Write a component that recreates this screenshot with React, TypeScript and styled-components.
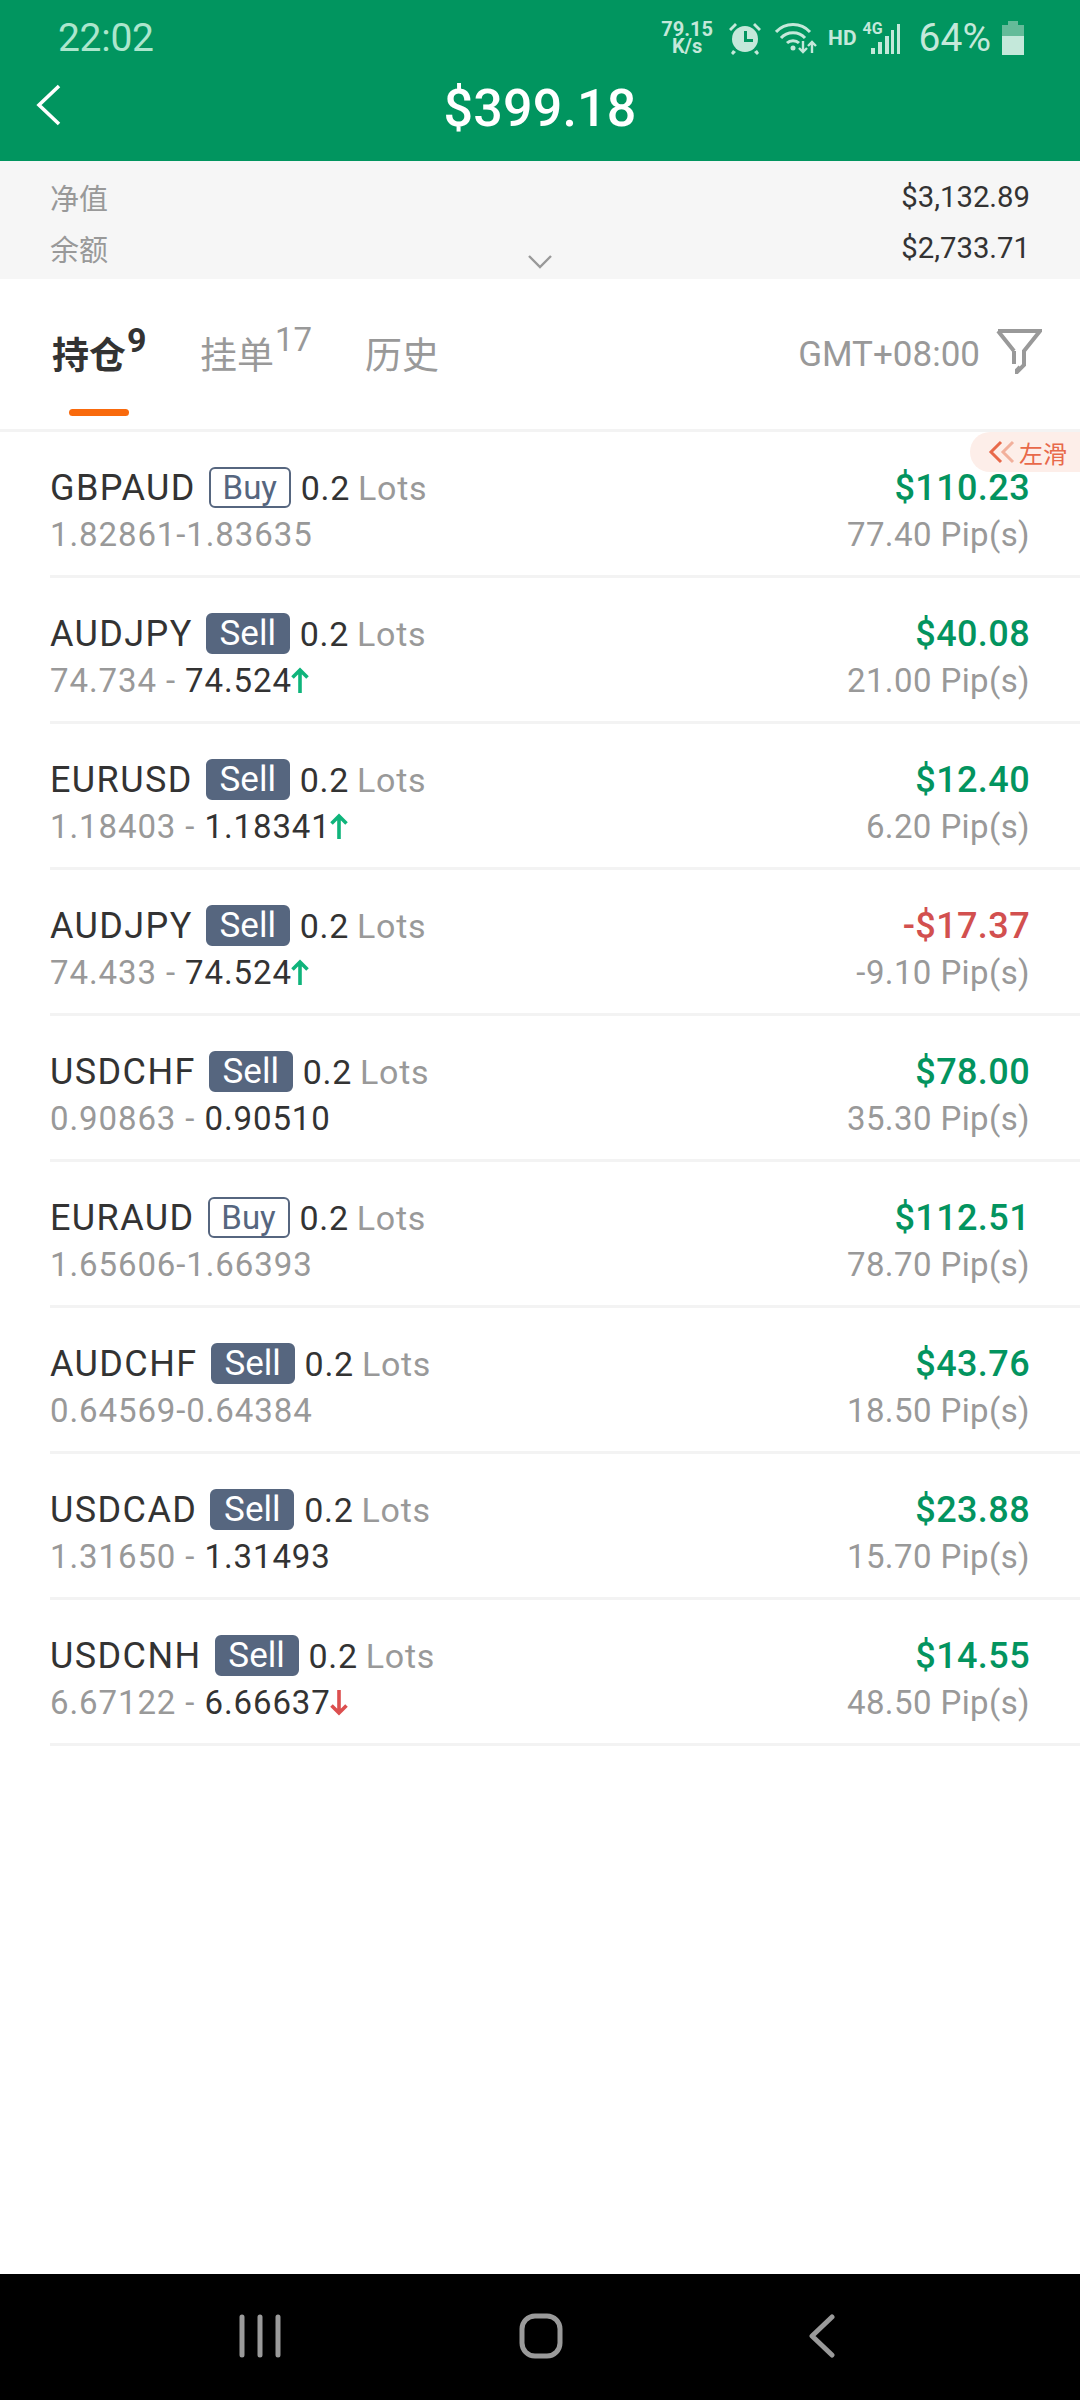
import React from 'react';
import styled, { createGlobalStyle } from 'styled-components';

const GlobalStyle = createGlobalStyle`
    html, body {
        margin: 0;
        padding: 0;
        background: #fff;
    }
    body {
        font-family: Roboto, "Noto Sans CJK SC", sans-serif;
    }
`

const Screen = styled.div`
    width: 1080px;
    height: 2400px;
    display: flex;
    flex-direction: column;
    background: #fff;
    position: relative;
    overflow: hidden;
`

const Header = styled.div`
    height: 161px;
    flex: none;
    background: #01955f;
    display: flex;
    flex-direction: column;
`

const StatusBar = styled.div`
    height: 76px;
    display: flex;
    align-items: center;
    padding: 0 56px 0 58px;
    color: #c4e8da;
`

const Clock = styled.div`
    font-size: 39px;
    line-height: 44px;
    color: #ace6cd;
    margin-right: auto;
    letter-spacing: -0.3px;
`

const NetSpeed = styled.div`
    width: 54px;
    margin-right: 14px;
    font-size: 20px;
    font-weight: 700;
    line-height: 17px;
    text-align: center;
`

const AlarmGap = styled.span`
    width: 13px;
`

const HdText = styled.div`
    font-size: 21px;
    font-weight: 700;
    margin: 0 6px 0 11px;
`

const SignalBox = styled.div`
    width: 38px;
    height: 34px;
    position: relative;
`

const NetworkBadge = styled.span`
    position: absolute;
    left: 0;
    top: 0;
    font-size: 16px;
    line-height: 16px;
    font-weight: 700;
`

const Battery = styled.div`
    font-size: 39px;
    line-height: 44px;
    margin: 0 11px 0 18px;
`

const TitleBar = styled.div`
    height: 60px;
    position: relative;
    display: flex;
    align-items: center;
    justify-content: center;
`

const Title = styled.div`
    color: #fff;
    font-size: 52px;
    line-height: 60px;
    font-weight: 500;
    letter-spacing: 0.2px;
    position: relative;
    top: 3px;
`

const BackButton = styled.svg`
    position: absolute;
    left: 36px;
    top: 8px;
`

const Summary = styled.div`
    height: 118px;
    flex: none;
    background: #f6f6f6;
    padding: 10px 50px 0;
    box-sizing: border-box;
    position: relative;
`

const SummaryRow = styled.div`
    height: 51px;
    display: flex;
    justify-content: space-between;
    align-items: center;
    font-size: 29px;
    color: #999;
`

const SummaryValue = styled.span`
    color: #333;
    font-size: 29.3px;
`

const ExpandIcon = styled.svg`
    position: absolute;
    left: 527px;
    top: 93px;
`

const TabBar = styled.div`
    height: 153px;
    flex: none;
    box-sizing: border-box;
    border-bottom: 3px solid #f3f3f3;
    display: flex;
    padding: 0 38px 0 52px;
    position: relative;
`

const Tab = styled.div<{ $active?: boolean; $width: number }>`
    width: ${p => p.$width}px;
    height: 150px;
    position: relative;
    display: flex;
    align-items: flex-start;
    padding-top: 53px;
    box-sizing: border-box;
    font-size: 37px;
    line-height: 50px;
    font-weight: ${p => (p.$active ? 700 : 400)};
    color: ${p => (p.$active ? '#333' : '#999')};
`

const TabCount = styled.sup<{ $active?: boolean }>`
    font-size: ${p => (p.$active ? 34 : 33)}px;
    line-height: 32px;
    margin-top: -8px;
    margin-left: 1px;
    vertical-align: baseline;
    font-weight: ${p => (p.$active ? 700 : 400)};
`

const TabMark = styled.div`
    position: absolute;
    left: 17px;
    top: 130px;
    width: 60px;
    height: 7px;
    border-radius: 4px;
    background: #f96a0d;
`

const TabTools = styled.div`
    margin-left: auto;
    height: 150px;
    display: flex;
    align-items: center;
    box-sizing: border-box;
    color: #999;
    font-size: 35px;
`

const FilterIcon = styled.svg`
    margin-left: 16px;
    margin-top: -6px;
`

const TradeList = styled.div`
    flex: 1;
    position: relative;
`

const TradeRow = styled.div`
    height: 146px;
    box-sizing: border-box;
    margin-left: 50px;
    padding-right: 50px;
    padding-top: 35px;
    border-bottom: 3px solid #f3f3f3;
    display: flex;
    justify-content: space-between;
`

const TradeColumn = styled.div<{ $right?: boolean }>`
    display: flex;
    flex-direction: column;
    align-items: ${p => (p.$right ? 'flex-end' : 'flex-start')};
`

const TopLine = styled.div`
    height: 41px;
    display: flex;
    align-items: center;
    font-size: 36px;
    letter-spacing: 1.4px;
    color: #333;
`

const BottomLine = styled.div`
    height: 44px;
    margin-top: 4px;
    display: flex;
    align-items: center;
    font-size: 33px;
    letter-spacing: 0.9px;
    color: #999;
    white-space: pre;
`

const PipsLine = styled(BottomLine)`
    letter-spacing: 0.4px;
`

const SideTag = styled.span<{ $buy?: boolean }>`
    height: 41px;
    box-sizing: border-box;
    width: ${p => (p.$buy ? 82 : 84)}px;
    margin: 0 10px 0 13px;
    display: flex;
    align-items: center;
    justify-content: center;
    border-radius: 6px;
    font-size: ${p => (p.$buy ? 33 : 35)}px;
    letter-spacing: 0;
    border: 2px solid #56667f;
    background: ${p => (p.$buy ? '#fff' : '#56667f')};
    color: ${p => (p.$buy ? '#56667f' : '#fff')};
`

const LotSize = styled.span`
    color: #333;
    font-size: 34px;
    letter-spacing: 0.7px;
`

const LotUnit = styled.span`
    color: #999;
    font-size: 34px;
    margin-left: 8px;
    letter-spacing: 0.7px;
`

const Current = styled.span`
    color: #333;
    font-weight: 450;
`

const Profit = styled.div<{ $loss?: boolean }>`
    height: 41px;
    display: flex;
    align-items: center;
    font-size: 36px;
    font-weight: 465;
    letter-spacing: 0.4px;
    color: ${p => (p.$loss ? '#d2504f' : '#03945f')};
`

const SwipeHint = styled.div`
    position: absolute;
    right: 0;
    top: 0;
    width: 110px;
    height: 40px;
    border-radius: 20px 0 0 20px;
    background: #fdeee9;
    color: #e8694a;
    font-size: 24px;
    display: flex;
    align-items: center;
    padding-left: 18px;
    box-sizing: border-box;
    gap: 3px;
`

const ArrowIcon = styled.svg<{ $down?: boolean }>`
    margin-left: -2px;
    transform: ${p => (p.$down ? 'rotate(180deg)' : 'none')};
`

const NavBar = styled.div`
    height: 126px;
    flex: none;
    background: #000;
    position: relative;
    display: grid;
    grid-template-columns: 239px 42px 238px 44px 245px 27px 245px;
    align-items: center;
    padding-bottom: 2px;
    box-sizing: border-box;
`

type Trade = {
    symbol: string;
    side: 'Buy' | 'Sell';
    open: string;
    close?: string;
    arrow?: 'up' | 'down';
    profit: string;
    pips: string;
};

const trades: Trade[] = [
    { symbol: 'GBPAUD', side: 'Buy', open: '1.82861-1.83635', profit: '$110.23', pips: '77.40 Pip(s)' },
    { symbol: 'AUDJPY', side: 'Sell', open: '74.734', close: '74.524', arrow: 'up', profit: '$40.08', pips: '21.00 Pip(s)' },
    { symbol: 'EURUSD', side: 'Sell', open: '1.18403', close: '1.18341', arrow: 'up', profit: '$12.40', pips: '6.20 Pip(s)' },
    { symbol: 'AUDJPY', side: 'Sell', open: '74.433', close: '74.524', arrow: 'up', profit: '-$17.37', pips: '-9.10 Pip(s)' },
    { symbol: 'USDCHF', side: 'Sell', open: '0.90863', close: '0.90510', profit: '$78.00', pips: '35.30 Pip(s)' },
    { symbol: 'EURAUD', side: 'Buy', open: '1.65606-1.66393', profit: '$112.51', pips: '78.70 Pip(s)' },
    { symbol: 'AUDCHF', side: 'Sell', open: '0.64569-0.64384', profit: '$43.76', pips: '18.50 Pip(s)' },
    { symbol: 'USDCAD', side: 'Sell', open: '1.31650', close: '1.31493', profit: '$23.88', pips: '15.70 Pip(s)' },
    { symbol: 'USDCNH', side: 'Sell', open: '6.67122', close: '6.66637', arrow: 'down', profit: '$14.55', pips: '48.50 Pip(s)' },
];

const PriceArrow: React.FC<{ dir: 'up' | 'down' }> = ({ dir }) => (
    <ArrowIcon $down={dir === 'down'} width="20" height="27" viewBox="0 0 20 27" fill="none" stroke={dir === 'up' ? '#0fb47b' : '#dc4f4f'} strokeWidth="3.6">
        <path d="M10 26V3M2.5 10.5L10 3l7.5 7.5" />
    </ArrowIcon>
);

const AlarmIcon = () => (
    <svg width="34" height="34" viewBox="0 0 34 34" fill="#c4e8da">
        <circle cx="17" cy="18" r="13" />
        <path d="M1 8l6-6 2 2-6 6zM33 8l-6-6-2 2 6 6zM5 29l3 2-3 3-2-2zM29 29l-3 2 3 3 2-2z" />
        <path d="M16 10h3v8h6v3h-9z" fill="#01955f" />
    </svg>
);

const WifiIcon = () => (
    <svg width="42" height="34" viewBox="0 0 42 34" fill="none" stroke="#c4e8da" strokeWidth="3">
        <path d="M1 11C10 1 26 1 35 11M6 17c6-7 18-7 24 0M12 22c3-3 9-3 12 0" />
        <circle cx="18" cy="27" r="2.5" fill="#c4e8da" stroke="none" />
        <path d="M28 20v11M24 27l4 4 4-4M37 32V21M33 25l4-4 4 4" strokeWidth="2.4" />
    </svg>
);

const SignalIcon = () => (
    <SignalBox>
        <NetworkBadge>4G</NetworkBadge>
        <svg width="38" height="34" viewBox="0 0 38 34" fill="#c4e8da">
            <rect x="8" y="27" width="4" height="6" />
            <rect x="15" y="21" width="4" height="12" />
            <rect x="22" y="15" width="4" height="18" />
            <rect x="28" y="9" width="3" height="24" />
            <rect x="34" y="3" width="3" height="30" />
        </svg>
    </SignalBox>
);

const BatteryIcon = () => (
    <svg width="22" height="34" viewBox="0 0 22 34">
        <rect x="6" y="0" width="10" height="5" fill="#64bb99" />
        <rect x="0" y="4" width="22" height="11" fill="#64bb99" />
        <rect x="0" y="15" width="22" height="19" fill="#c4e8da" />
    </svg>
);

const App: React.FC = () => {
    return (
        <Screen>
            <GlobalStyle />
            <Header>
                <StatusBar>
                    <Clock>22:02</Clock>
                    <NetSpeed>79.15<br />K/s</NetSpeed>
                    <AlarmIcon />
                    <AlarmGap />
                    <WifiIcon />
                    <HdText>HD</HdText>
                    <SignalIcon />
                    <Battery>64%</Battery>
                    <BatteryIcon />
                </StatusBar>
                <TitleBar>
                    <BackButton width="26" height="42" viewBox="0 0 26 42" fill="none" stroke="#fff" strokeWidth="3.6">
                        <path d="M23 2L3 21l20 19" />
                    </BackButton>
                    <Title>$399.18</Title>
                </TitleBar>
            </Header>
            <Summary>
                <SummaryRow><span>净值</span><SummaryValue>$3,132.89</SummaryValue></SummaryRow>
                <SummaryRow><span>余额</span><SummaryValue>$2,733.71</SummaryValue></SummaryRow>
                <ExpandIcon width="26" height="15" viewBox="0 0 26 15" fill="none" stroke="#999" strokeWidth="2.4">
                    <path d="M2 2l11 11L24 2" />
                </ExpandIcon>
            </Summary>
            <TabBar>
                <Tab $active $width={148}>持仓<TabCount $active>9</TabCount><TabMark /></Tab>
                <Tab $width={165}>挂单<TabCount>17</TabCount></Tab>
                <Tab $width={100}>历史</Tab>
                <TabTools>
                    GMT+08:00
                    <FilterIcon width="46" height="46" viewBox="0 0 46 46" fill="none" stroke="#999" strokeWidth="4">
                        <path d="M2 3h42L28 23v14l-7 7v-2l3-3M18 23L2 3M18 23v13" />
                    </FilterIcon>
                </TabTools>
            </TabBar>
            <TradeList>
                <SwipeHint>
                    <svg width="28" height="24" viewBox="0 0 28 24" fill="none" strokeWidth="3">
                        <path d="M13 2L3 12l10 10" stroke="#e8694a" />
                        <path d="M25 2L15 12l10 10" stroke="#f2b09c" />
                    </svg>
                    左滑
                </SwipeHint>
                {trades.map(t => (
                    <TradeRow key={t.symbol + t.open}>
                        <TradeColumn>
                            <TopLine>
                                {t.symbol}
                                <SideTag $buy={t.side === 'Buy'}>{t.side}</SideTag>
                                <LotSize>0.2</LotSize>
                                <LotUnit>Lots</LotUnit>
                            </TopLine>
                            <BottomLine>
                                {t.open}
                                {t.close && <> - <Current>{t.close}</Current></>}
                                {t.arrow && <PriceArrow dir={t.arrow} />}
                            </BottomLine>
                        </TradeColumn>
                        <TradeColumn $right>
                            <Profit $loss={t.profit.startsWith('-')}>{t.profit}</Profit>
                            <PipsLine>{t.pips}</PipsLine>
                        </TradeColumn>
                    </TradeRow>
                ))}
            </TradeList>
            <NavBar>
                <span />
                <svg width="42" height="44" viewBox="0 0 42 44" fill="none" stroke="#9a9a9a" strokeWidth="5" strokeLinecap="round">
                    <path d="M3 3v38M21 3v38M39 3v38" />
                </svg>
                <span />
                <svg width="44" height="46" viewBox="0 0 44 46" fill="none" stroke="#9a9a9a" strokeWidth="5">
                    <rect x="3" y="3" width="38" height="40" rx="13" />
                </svg>
                <span />
                <svg width="27" height="44" viewBox="0 0 27 44" fill="none" stroke="#9a9a9a" strokeWidth="5" strokeLinecap="round" strokeLinejoin="round">
                    <path d="M24 3L4 22l20 19" />
                </svg>
            </NavBar>
        </Screen>
    )
}

export default App;
